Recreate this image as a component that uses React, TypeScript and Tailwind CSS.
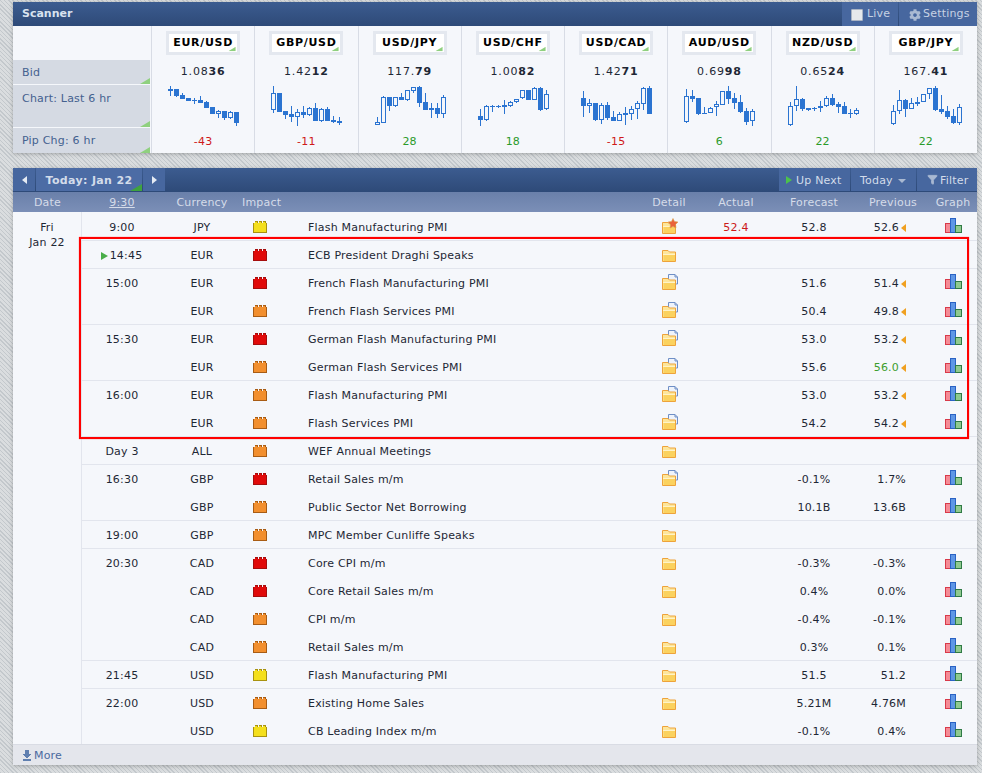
import { Filter } from 'lucide-react'
import { FaCog } from 'react-icons/fa'

type Candle = [number, number, number, number, number?]

const pairs: { name: string; bid: [string, string]; pip: string; off: number; candles: Candle[] }[] = [
  {
    name: 'EUR/USD', bid: ['1.08', '36'], pip: '-43', off: 15,
    candles: [[32, 62, 42, 48], [41, 66, 42, 62], [55, 72, 60, 71], [68, 78, 69, 77], [69, 86, 75, 78], [64, 84, 75, 83], [78, 100, 82, 98], [96, 117, 97, 116], [104, 128, 109, 116, 1], [108, 134, 108, 129], [109, 131, 112, 128, 1], [111, 152, 111, 143]],
  },
  {
    name: 'GBP/USD', bid: ['1.42', '12'], pip: '-11', off: 15,
    candles: [[33, 113, 55, 104, 1], [54, 110, 54, 110], [108, 131, 108, 120], [94, 140, 117, 126], [102, 152, 112, 125, 1], [94, 128, 111, 120], [95, 122, 100, 119, 1], [85, 138, 99, 138], [100, 140, 102, 137, 1], [97, 138, 102, 138], [124, 143, 135, 141], [127, 150, 138, 144]],
  },
  {
    name: 'USD/JPY', bid: ['117.', '79'], pip: '28', off: 0,
    candles: [[112, 136, 127, 134, 1], [49, 130, 52, 128, 1], [51, 92, 51, 78], [51, 80, 52, 77, 1], [40, 61, 51, 60], [30, 62, 31, 59, 1], [20, 40, 22, 32, 1], [19, 80, 22, 69], [40, 91, 66, 90], [70, 113, 84, 90], [70, 113, 84, 102], [46, 113, 52, 101, 1]],
  },
  {
    name: 'USD/CHF', bid: ['1.00', '82'], pip: '18', off: 0,
    candles: [[88, 137, 108, 120], [76, 124, 79, 119, 1], [76, 95, 78, 81], [76, 83, 78, 81], [61, 101, 75, 81], [64, 80, 67, 77, 1], [56, 69, 56, 67, 1], [30, 56, 31, 55, 1], [30, 60, 31, 60], [20, 60, 25, 59, 1], [22, 92, 25, 90], [30, 90, 43, 88, 1]],
  },
  {
    name: 'USD/CAD', bid: ['1.42', '71'], pip: '-15', off: 0,
    candles: [[34, 110, 54, 78], [57, 100, 70, 77, 1], [69, 122, 69, 120], [70, 133, 75, 119, 1], [67, 120, 75, 114], [94, 124, 111, 123], [97, 124, 103, 122, 1], [82, 136, 99, 105], [78, 121, 88, 101, 1], [62, 116, 70, 88, 1], [20, 90, 25, 71, 1], [19, 103, 25, 101]],
  },
  {
    name: 'AUD/USD', bid: ['0.69', '98'], pip: '6', off: 0,
    candles: [[28, 128, 49, 127, 1], [30, 67, 48, 56], [54, 104, 54, 101], [82, 101, 99, 101], [82, 100, 83, 100, 1], [64, 107, 73, 82, 1], [33, 76, 34, 74, 1], [19, 72, 34, 56], [40, 86, 54, 68], [45, 100, 67, 95], [83, 134, 93, 125], [87, 137, 94, 124, 1]],
  },
  {
    name: 'NZD/USD', bid: ['0.65', '24'], pip: '22', off: 0,
    candles: [[67, 137, 79, 136, 1], [19, 92, 58, 79, 1], [54, 92, 58, 86], [83, 92, 85, 89], [80, 94, 83, 88, 1], [64, 97, 78, 83], [48, 82, 55, 79, 1], [42, 79, 54, 74], [66, 98, 72, 80], [67, 102, 78, 101], [86, 113, 98, 100], [84, 106, 91, 101, 1]],
  },
  {
    name: 'GBP/JPY', bid: ['167.', '41'], pip: '22', off: 0,
    candles: [[76, 135, 94, 133, 1], [30, 103, 61, 94, 1], [57, 112, 61, 86], [55, 88, 70, 86, 1], [52, 77, 65, 71, 1], [42, 66, 43, 65, 1], [25, 58, 25, 43, 1], [19, 94, 25, 90], [45, 102, 87, 95], [78, 118, 94, 110], [88, 133, 108, 129], [72, 136, 82, 128, 1]],
  },
]

type Row = {
  time?: string
  cur: string
  imp: 'y' | 'r' | 'o'
  name: string
  detail?: 'star' | 'doc'
  actual?: string
  forecast?: string
  prev?: string
  arrow?: boolean
  good?: boolean
  graph?: boolean
  line?: boolean
  now?: boolean
}

const rows: Row[] = [
  { time: '9:00', cur: 'JPY', imp: 'y', name: 'Flash Manufacturing PMI', detail: 'star', actual: '52.4', forecast: '52.8', prev: '52.6', arrow: true, graph: true },
  { time: '14:45', now: true, cur: 'EUR', imp: 'r', name: 'ECB President Draghi Speaks', line: true },
  { time: '15:00', cur: 'EUR', imp: 'r', name: 'French Flash Manufacturing PMI', detail: 'doc', forecast: '51.6', prev: '51.4', arrow: true, graph: true, line: true },
  { cur: 'EUR', imp: 'o', name: 'French Flash Services PMI', detail: 'doc', forecast: '50.4', prev: '49.8', arrow: true, graph: true },
  { time: '15:30', cur: 'EUR', imp: 'r', name: 'German Flash Manufacturing PMI', detail: 'doc', forecast: '53.0', prev: '53.2', arrow: true, graph: true, line: true },
  { cur: 'EUR', imp: 'o', name: 'German Flash Services PMI', detail: 'doc', forecast: '55.6', prev: '56.0', arrow: true, good: true, graph: true },
  { time: '16:00', cur: 'EUR', imp: 'o', name: 'Flash Manufacturing PMI', detail: 'doc', forecast: '53.0', prev: '53.2', arrow: true, graph: true, line: true },
  { cur: 'EUR', imp: 'o', name: 'Flash Services PMI', detail: 'doc', forecast: '54.2', prev: '54.2', arrow: true, graph: true },
  { time: 'Day 3', cur: 'ALL', imp: 'o', name: 'WEF Annual Meetings', line: true },
  { time: '16:30', cur: 'GBP', imp: 'r', name: 'Retail Sales m/m', detail: 'doc', forecast: '-0.1%', prev: '1.7%', graph: true, line: true },
  { cur: 'GBP', imp: 'o', name: 'Public Sector Net Borrowing', forecast: '10.1B', prev: '13.6B', graph: true },
  { time: '19:00', cur: 'GBP', imp: 'o', name: 'MPC Member Cunliffe Speaks', line: true },
  { time: '20:30', cur: 'CAD', imp: 'r', name: 'Core CPI m/m', forecast: '-0.3%', prev: '-0.3%', graph: true, line: true },
  { cur: 'CAD', imp: 'r', name: 'Core Retail Sales m/m', forecast: '0.4%', prev: '0.0%', graph: true },
  { cur: 'CAD', imp: 'o', name: 'CPI m/m', forecast: '-0.4%', prev: '-0.1%', graph: true },
  { cur: 'CAD', imp: 'o', name: 'Retail Sales m/m', forecast: '0.3%', prev: '0.1%', graph: true },
  { time: '21:45', cur: 'USD', imp: 'y', name: 'Flash Manufacturing PMI', forecast: '51.5', prev: '51.2', graph: true, line: true },
  { time: '22:00', cur: 'USD', imp: 'o', name: 'Existing Home Sales', forecast: '5.21M', prev: '4.76M', graph: true, line: true },
  { cur: 'USD', imp: 'y', name: 'CB Leading Index m/m', forecast: '-0.1%', prev: '0.4%', graph: true },
]

function Corner({ className }: { className: string }) {
  return (
    <svg width="10" height="6" viewBox="0 0 10 6" className={`absolute ${className}`}>
      <path d="M10 0V6H0Z" fill="#8fd07f" />
    </svg>
  )
}

function Chart({ candles, off }: { candles: Candle[]; off: number }) {
  const y = (v: number) => Math.round((v - off) / 3)
  return (
    <svg width="103" height="50" viewBox="0 0 103 50" shapeRendering="crispEdges" className="block">
      {candles.map(([hi, lo, top, bottom, hollow], i) => {
        const x = 18 + i * 6
        const h = Math.max(y(bottom) - y(top), 1)
        return (
          <g key={i}>
            <rect x={x} y={y(hi)} width="1" height={y(lo) - y(hi)} fill="#2b74d1" />
            <rect x={x - 2} y={y(top)} width="5" height={h} fill="#2b74d1" />
            {hollow && h > 2 && <rect x={x - 1} y={y(top) + 1} width="3" height={h - 2} fill="#f5f7fb" />}
          </g>
        )
      })}
    </svg>
  )
}

function Brick({ kind }: { kind: Row['imp'] }) {
  const colors = {
    y: ['#f4df1c', '#a8920f'],
    r: ['#e00a0a', '#a50d0d'],
    o: ['#f28f2e', '#a85c14'],
  }[kind]
  return (
    <svg width="14" height="12" viewBox="0 0 14 12" shapeRendering="crispEdges">
      <path d="M0 2H2V0H5V2H6V0H9V2H10V0H13V2H14V12H0Z" fill={colors[1]} />
      <path d="M1 2H2V1H4V2H6V1H8V2H10V1H12V2H13V11H1Z" fill={colors[0]} />
    </svg>
  )
}

function FolderIcon({ variant }: { variant?: Row['detail'] }) {
  return (
    <svg width="18" height="17" viewBox="0 0 18 17" className="ml-[4px]">
      {variant === 'doc' && (
        <>
          <path d="M6.500 .5H13L15.500 3V10H6.500Z" fill="#eef3fb" stroke="#6f8fc6" />
          <path d="M13 .5V3H15.500" fill="none" stroke="#6f8fc6" />
        </>
      )}
      <path d="M.5 4.500H6L7.500 6H13.500V15.500H.5Z" fill="#fde69b" stroke="#eea33a" />
      <path d="M1.500 9H13V15H1.500Z" fill="#fbd25f" />
      <path d="M1 8.500H13" stroke="#fff3c8" />
      {variant === 'star' && (
        <path d="M11 .5L12.500 3.500L16 4L13.500 6.500L14 10L11 8.500L8 10L8.500 6.500L6 4L9.500 3.500Z" fill="#e9623a" stroke="#d9a24a" strokeWidth=".6" />
      )}
    </svg>
  )
}

function GraphIcon() {
  return (
    <svg width="17" height="15" viewBox="0 0 17 15" shapeRendering="crispEdges" className="-mt-[2px]">
      <rect x=".5" y="5.500" width="5" height="9" fill="#f58b95" stroke="#d83a4a" />
      <rect x="5.500" y=".5" width="5" height="14" fill="#5e96e6" stroke="#2a62c4" />
      <rect x="10.500" y="7.500" width="6" height="7" fill="#8fc98f" stroke="#2f7a45" />
    </svg>
  )
}

const gridCols = 'grid grid-cols-[80px_80px_36px_362px_58px_76px_80px_78px_45px]'

export default function App() {
  return (
    <div className="h-[773px] w-[982px] overflow-hidden bg-[repeating-linear-gradient(45deg,#c3c8cc_0px,#c3c8cc_1px,#dadddf_1px,#dadddf_3px)] pl-[13px] pt-[2px] font-['DejaVu_Sans',sans-serif] text-[11px] tracking-[0.2px] text-[#1e2735]">
      <section className="w-[964px] bg-[#f5f7fb] shadow-[0_1px_4px_rgba(0,0,0,0.25)]">
        <header className="flex h-6 items-stretch justify-between bg-gradient-to-b from-[#3c5c90] to-[#2e4a78]">
          <h2 className="flex items-center pl-[9px] pt-px text-[11px] font-bold tracking-normal text-[#d9e2ef]">Scanner</h2>
          <div className="flex text-[#c6d2e4]">
            <div className="flex w-[56px] items-center gap-[4px] bg-[#47679f] pl-[9px] pt-px">
              <span className="h-[12px] w-[12px] rounded-[1px] border border-[#aab4c4] bg-[#e7e9ec]" />
              Live
            </div>
            <div className="ml-px flex w-[78px] items-center gap-[2px] bg-[#47679f] pl-[10px] pt-px">
              <FaCog size={12} className="text-[#a9b9d2]" />
              Settings
            </div>
          </div>
        </header>
        <div className="flex h-[127px]">
          <div className="flex w-[138px] shrink-0 flex-col text-[#44618f]">
            <div className="h-[34px]" />
            <div className="relative flex h-6 w-[137px] items-center bg-[#d5dae3] pl-[9px] pt-[2px]">
              Bid
              <Corner className="bottom-0 right-0" />
            </div>
            <div className="relative mt-px h-[42px] w-[137px] bg-[#d5dae3] pl-[9px] pt-[6px]">
              Chart: Last 6 hr
              <Corner className="bottom-0 right-0" />
            </div>
            <div className="relative mt-px flex h-[25px] w-[137px] items-center bg-[#d5dae3] pl-[9px] pt-[2px]">
              Pip Chg: 6 hr
              <Corner className="bottom-0 right-0" />
            </div>
          </div>
          {pairs.map((p) => (
            <div key={p.name} className="flex min-w-0 flex-1 flex-col items-center border-l border-[#d8dce5]">
              <div className="relative mt-[5px] flex h-6 w-[74px] items-center justify-center border-[3px] border-[#e4e8ef] bg-white pt-px text-[11px] font-bold tracking-[0.7px] text-black">
                {p.name}
                <Corner className="bottom-0 right-0 scale-75" />
              </div>
              <div className="mt-[9px] h-[15px] tracking-[0.8px]">
                {p.bid[0]}
                <b>{p.bid[1]}</b>
              </div>
              <div className="mt-px h-[50px] w-[103px] self-start">
                <Chart candles={p.candles} off={p.off} />
              </div>
              <div className={`mt-[4px] ${p.pip.startsWith('-') ? 'text-[#cf1a1a]' : 'text-[#2a9a2a]'}`}>{p.pip}</div>
            </div>
          ))}
        </div>
      </section>

      <section className="relative mt-[15px] w-[964px] bg-[#f5f7fb] shadow-[0_1px_4px_rgba(0,0,0,0.25)]">
        <div className="flex h-6 items-stretch justify-between bg-gradient-to-b from-[#3c5c90] to-[#2e4a78] text-[#d3dcea]">
          <div className="flex h-[23px]">
            <button className="flex w-[22px] items-center justify-center bg-[#47679f]">
              <span className="border-y-[4px] border-r-[5px] border-y-transparent border-r-[#e5ebf3]" />
            </button>
            <div className="relative ml-px flex w-[106px] items-center justify-center bg-[#4c6ca5] pt-[3px] font-bold tracking-[0.35px]">
              Today: Jan 22
              <span className="absolute bottom-0 right-0 h-0 w-0 border-b-[7px] border-l-[12px] border-b-[#3fa33f] border-l-transparent" />
            </div>
            <button className="ml-px flex w-[22px] items-center justify-center bg-[#47679f]">
              <span className="border-y-[4px] border-l-[5px] border-y-transparent border-l-[#e5ebf3]" />
            </button>
          </div>
          <div className="flex h-[23px]">
            <div className="flex w-[71px] items-center gap-[4px] bg-[#47679f] pl-[7px] pt-[3px]">
              <span className="-mt-[3px] border-y-[4px] border-l-[6px] border-y-transparent border-l-[#4cc24c]" />
              Up Next
            </div>
            <div className="ml-px flex w-[65px] items-center gap-[5px] bg-[#47679f] pl-[9px] pt-[3px]">
              Today
              <span className="border-x-[4px] border-t-[4px] border-x-transparent border-t-[#a9b9d2]" />
            </div>
            <div className="ml-px flex w-[60px] items-center gap-[2px] bg-[#47679f] pl-[10px] pt-[3px]">
              <Filter size={11} fill="#a9b9d2" className="-mt-[3px] text-[#a9b9d2]" />
              Filter
            </div>
          </div>
        </div>

        <div className="flex h-5 bg-gradient-to-b from-[#6a80aa] to-[#7b8fb7] pt-[2px] text-[#d5dce9]">
          <div className="flex w-[69px] items-center justify-center">Date</div>
          <div className={`${gridCols} flex-1 items-center text-center`}>
            <span className="underline">9:30</span>
            <span>Currency</span>
            <span className="whitespace-nowrap">Impact</span>
            <span />
            <span>Detail</span>
            <span>Actual</span>
            <span>Forecast</span>
            <span>Previous</span>
            <span className="pr-[3px]">Graph</span>
          </div>
        </div>

        <div className="flex">
          <div className="w-[69px] border-r border-[#e2e5ed] pt-[8px] text-center leading-[15px]">
            Fri
            <br />
            Jan 22
          </div>
          <div className="flex-1">
            {rows.map((r, i) => (
              <div key={i} className={`${gridCols} h-7 items-center border-t ${r.line ? 'border-[#e2e5ed]' : 'border-transparent'}`}>
                <div className={`relative pt-[4px] text-center ${r.now ? 'pl-[8px]' : ''}`}>
                  {r.now && <span className="absolute left-[19px] top-[8px] border-y-[4px] border-l-[7px] border-y-transparent border-l-[#49ad49]" />}
                  {r.time}
                </div>
                <div className="pt-[4px] text-center">{r.cur}</div>
                <div className="flex justify-center pt-px">
                  <Brick kind={r.imp} />
                </div>
                <div className="whitespace-nowrap pl-[30px] pt-[4px]">{r.name}</div>
                <div className="flex justify-center">
                  <FolderIcon variant={r.detail} />
                </div>
                <div className="pt-[4px] text-center text-[#cc1a1a]">{r.actual}</div>
                <div className="pt-[4px] text-center">{r.forecast}</div>
                <div className="relative pr-[26px] pt-[4px] text-right">
                  {r.arrow ? <span className={`mr-[7px] ${r.good ? 'text-[#3d9d2d]' : ''}`}>{r.prev}</span> : r.prev}
                  {r.arrow && <span className="absolute right-[26px] top-[8px] border-y-[4px] border-r-[5px] border-y-transparent border-r-[#f0a020]" />}
                </div>
                <div className="flex justify-center pr-[3px]">{r.graph && <GraphIcon />}</div>
              </div>
            ))}
          </div>
        </div>

        <footer className="flex h-[21px] items-center gap-[3px] border-t border-[#d9dce4] bg-[#e4e6ec] pl-[10px] text-[#4b6a9f]">
          <svg width="8" height="11" viewBox="0 0 8 11" shapeRendering="crispEdges">
            <path d="M2 0H6V4H8V5H7V6H6V7H5V8H3V7H2V6H1V5H0V4H2ZM0 9H8V11H0Z" fill="#5f7fb0" />
          </svg>
          <span className="pt-[2px]">More</span>
        </footer>

        <div className="pointer-events-none absolute left-[66px] top-[69px] h-[202px] w-[890px] border-2 border-[#ff0000] shadow-[0_0_1px_#ff6060]" />
      </section>
    </div>
  )
}
